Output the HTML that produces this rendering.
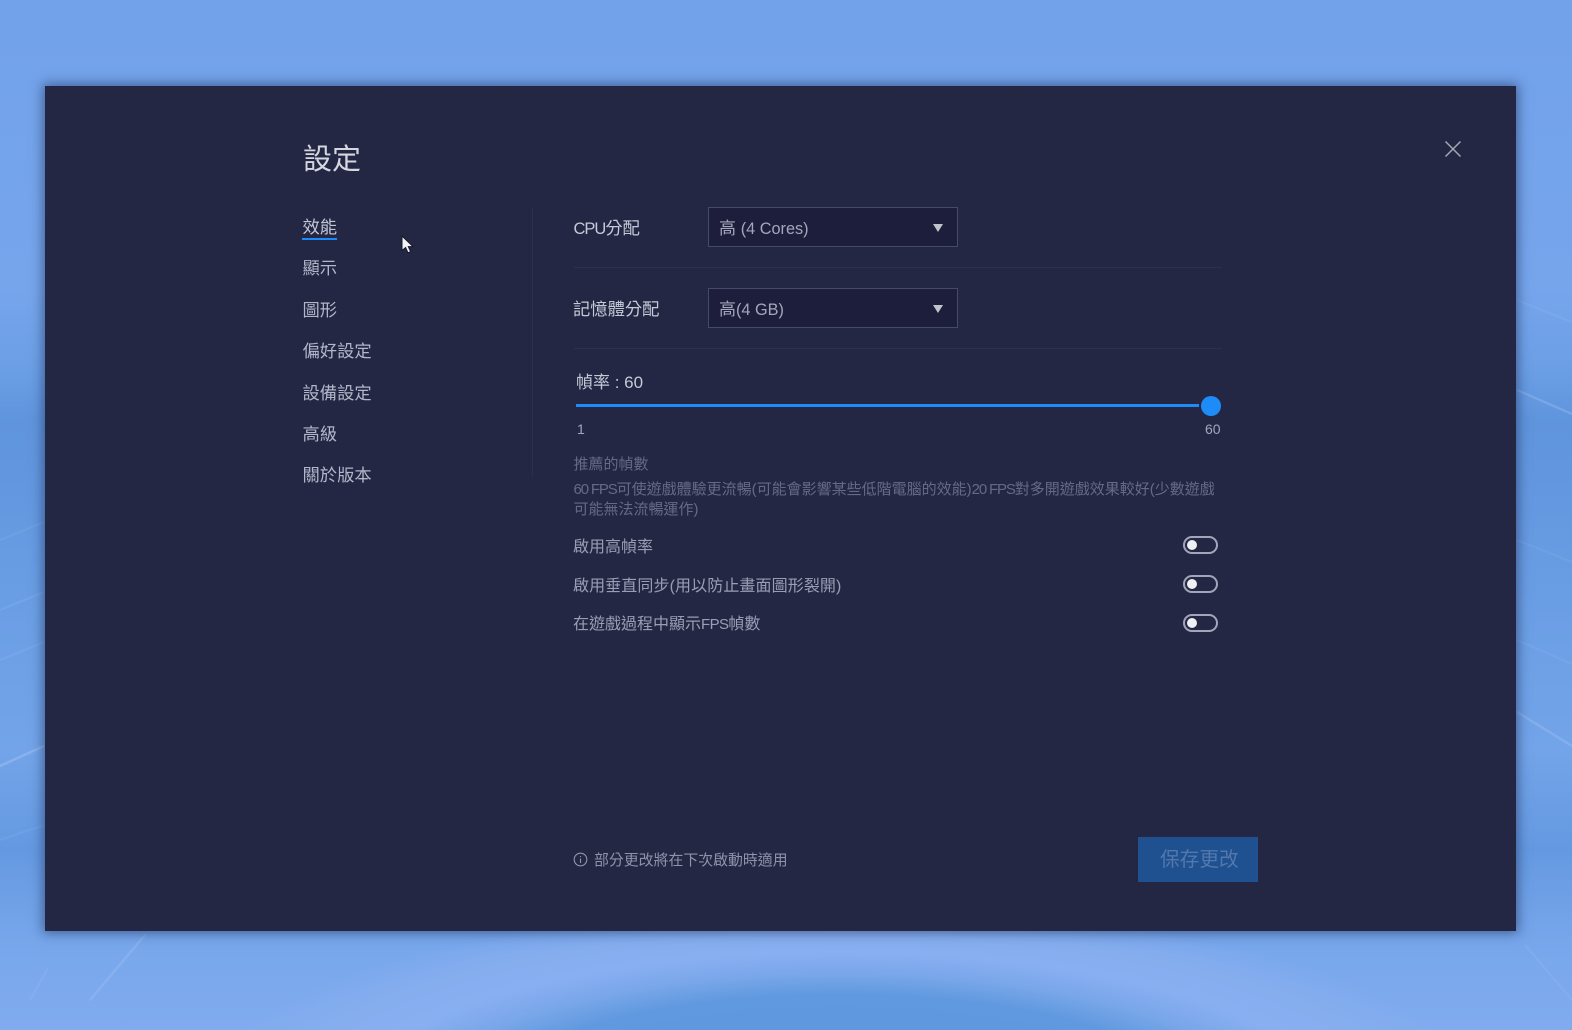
<!DOCTYPE html>
<html lang="zh-Hant"><head><meta charset="utf-8"><title>設定</title>
<style>
html,body{margin:0;padding:0;width:1572px;height:1030px;overflow:hidden;background:#72a2ea}
body{position:relative;font-family:"Liberation Sans","Noto Sans CJK TC",sans-serif}
.a{position:absolute;white-space:nowrap;line-height:1}
#bg{position:absolute;left:0;top:0;width:1572px;height:1030px;background:
radial-gradient(ellipse 650px 200px at 840px 1105px,#5c95dd 0,#6099df 55%,#7aa7ea 66%,#88aff1 76%,#86aeef 86%,rgba(136,175,240,0) 100%),
linear-gradient(180deg,#72a2ea 0,#76a5ec 290px,#6c9fe6 365px,#5f95dd 420px,#6397df 490px,#6a9ee4 600px,#73a4e9 750px,#6499e1 850px,#79a7ec 950px,#80abee 1030px)}
#panel{position:absolute;left:45px;top:86px;width:1471px;height:845px;background:#232744;box-shadow:0 0 11px 2px rgba(25,40,80,.55)}
.nav{left:302.5px;font-size:17.3px;color:#b3b6c8}
.sel{position:absolute;left:708px;width:250px;height:40px;background:#1c1e3c;border:1px solid #47496a;box-sizing:border-box}
.sel span{position:absolute;left:10px;top:12px;font-size:17px;line-height:1;color:#a4a7bb;white-space:nowrap}
.sel b{font-weight:400;font-size:16.3px}
.tri{position:absolute;left:224px;width:0;height:0;border-left:5.5px solid transparent;border-right:5.5px solid transparent;border-top:8px solid #c2c4cc;top:16px}
.hr{position:absolute;left:574px;width:648px;height:1px;background:#2d3150}
.lbl{font-size:17.3px;color:#c6c9d6;left:573px}
.lbl b{font-weight:400;font-size:16.5px;letter-spacing:-1px}
.tg{position:absolute;left:1183px;width:35px;height:18px;border:2px solid #a3a6b8;border-radius:10px;box-sizing:border-box}
.tg i{position:absolute;left:2px;top:2px;width:10px;height:10px;border-radius:50%;background:#eef0f4}
.opt{left:573px;font-size:16px;color:#9a9eb4}
.opt b{font-weight:400;font-size:15px;letter-spacing:-.6px}
.small{left:573.5px;font-size:15px;color:#646a86}
.small b{font-weight:400;font-size:15px;letter-spacing:-1.15px}
</style></head><body>
<div id="bg"></div>
<svg width="1572" height="1030" viewBox="0 0 1572 1030" style="position:absolute;left:0;top:0">
<defs><filter id="b2"><feGaussianBlur stdDeviation=".7"/></filter></defs>
<g filter="url(#b2)" fill="none" stroke-linecap="round" stroke="#a9c6f4">
<path d="M0 766L44 746" stroke-width="1.3" opacity=".8"/>
<path d="M0 610L44 592" stroke-width="1" opacity=".35"/>
<path d="M0 660L44 642" stroke-width="1" opacity=".35"/>
<path d="M0 540L44 522" stroke-width="1" opacity=".3"/>
<path d="M0 840L44 825" stroke-width="1" opacity=".3"/>
<path d="M1517 390L1572 414" stroke-width="1.2" opacity=".7"/>
<path d="M1517 712L1572 746" stroke-width="1.2" opacity=".7"/>
<path d="M1517 300L1572 322" stroke-width="1" opacity=".35"/>
<path d="M1517 540L1572 562" stroke-width="1" opacity=".3"/>
<path d="M1517 640L1572 664" stroke-width="1" opacity=".3"/>
<path d="M30 1000L48 968" stroke-width="1" opacity=".4"/>
<path d="M90 1000L145 935" stroke-width="1.5" opacity=".5"/>
<path d="M1572 1000L1525 945" stroke-width="1" opacity=".35"/>
</g>
</svg>
<div id="panel"></div>

<div class="a" style="left:303px;top:146px;font-size:29px;color:#d5d7e0">設定</div>
<svg width="18" height="18" viewBox="0 0 18 18" style="position:absolute;left:1444px;top:140px"><path d="M1.5 1.5L16.5 16.5M16.5 1.5L1.5 16.5" stroke="#a5a7b2" stroke-width="1.5" fill="none"/></svg>

<div class="a nav" style="top:219px;color:#c3c6d6">效能</div>
<div style="position:absolute;left:302px;top:238px;width:35px;height:2px;background:#1e8cf8"></div>
<div class="a nav" style="top:260px">顯示</div>
<div class="a nav" style="top:302px">圖形</div>
<div class="a nav" style="top:343px">偏好設定</div>
<div class="a nav" style="top:385px">設備設定</div>
<div class="a nav" style="top:426px">高級</div>
<div class="a nav" style="top:467px">關於版本</div>
<svg width="14" height="19" viewBox="0 0 14 19" style="position:absolute;left:401px;top:235px"><path d="M1 1V15.5L4.6 12.6L7 17.8L9.6 16.6L7.3 11.6H12Z" fill="#f2f3f6" stroke="#15172c" stroke-width="1"/></svg>
<div style="position:absolute;left:532px;top:207px;width:1px;height:270px;background:#2b2f4e"></div>

<div class="a lbl" style="top:220px;left:573.5px"><b>CPU</b>分配</div>
<div class="sel" style="top:207px"><span>高 <b>(4 Cores)</b></span><div class="tri"></div></div>
<div class="hr" style="top:267px"></div>
<div class="a lbl" style="top:301px">記憶體分配</div>
<div class="sel" style="top:288px"><span>高<b>(4 GB)</b></span><div class="tri"></div></div>
<div class="hr" style="top:348px"></div>

<div class="a" style="left:576px;top:374px;font-size:17px;color:#c6c9d6">幀率 : 60</div>
<div style="position:absolute;left:576px;top:404px;width:623px;height:3px;background:#1e8cf8"></div>
<div style="position:absolute;left:1201px;top:396px;width:20px;height:20px;border-radius:50%;background:#1e8cf8"></div>
<div class="a" style="left:577px;top:422px;font-size:14px;color:#a4a7ba">1</div>
<div class="a" style="left:1205px;top:422px;font-size:14px;color:#a4a7ba">60</div>

<div class="a small" style="top:457px">推薦的幀數</div>
<div class="a small" style="top:482px"><b>60 FPS</b>可使遊戲體驗更流暢(可能會影響某些低階電腦的效能)<b>20 FPS</b>對多開遊戲效果較好(少數遊戲</div>
<div class="a small" style="top:502px">可能無法流暢運作)</div>

<div class="a opt" style="top:540px">啟用高幀率</div>
<div class="tg" style="top:536px"><i></i></div>
<div class="a opt" style="top:579px;letter-spacing:.1px">啟用垂直同步(用以防止畫面圖形裂開)</div>
<div class="tg" style="top:575px"><i></i></div>
<div class="a opt" style="top:617px">在遊戲過程中顯示<b>FPS</b>幀數</div>
<div class="tg" style="top:614px"><i></i></div>

<svg width="15" height="15" viewBox="0 0 15 15" style="position:absolute;left:573px;top:852px"><circle cx="7.5" cy="7.5" r="6.3" fill="none" stroke="#9497aa" stroke-width="1.1"/><path d="M7.5 4V5M7.5 6.5V11" stroke="#9497aa" stroke-width="1.1"/></svg>
<div class="a" style="left:594px;top:854px;font-size:14.9px;color:#8f92a8">部分更改將在下次啟動時適用</div>
<div style="position:absolute;left:1138px;top:837px;width:120px;height:45px;background:#1f5090"></div>
<div class="a" style="left:1160px;top:851px;font-size:19.7px;color:#5278ad">保存更改</div>
</body></html>
